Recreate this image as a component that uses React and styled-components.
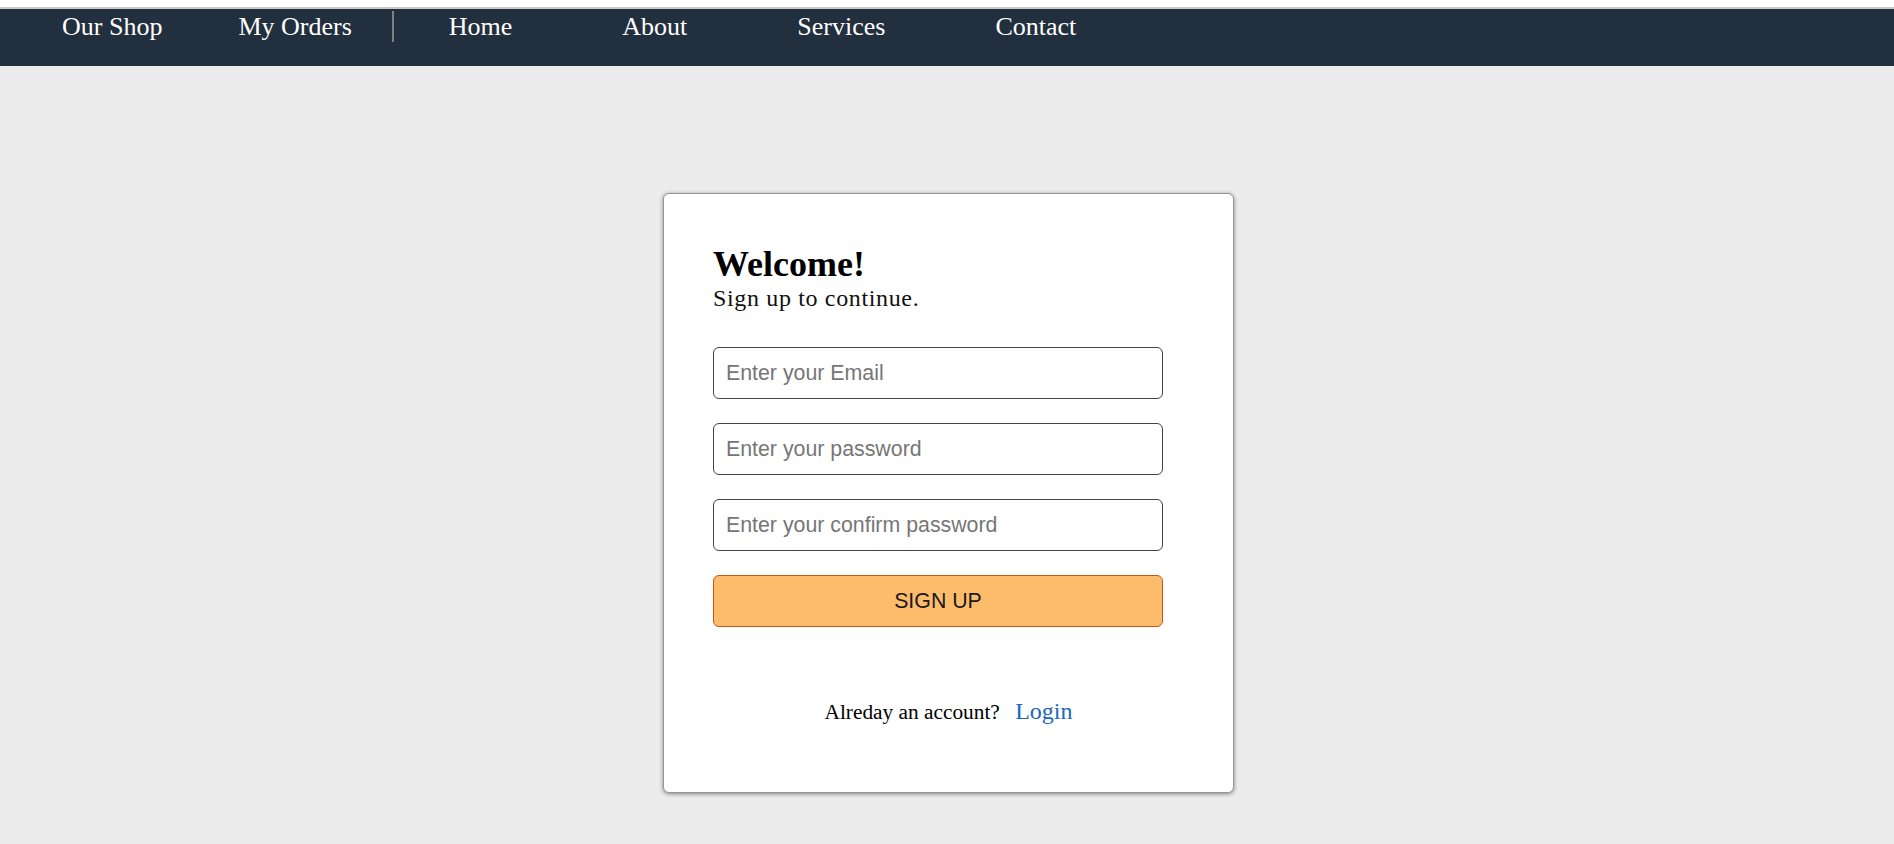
import React from "react";
import styled, { createGlobalStyle } from "styled-components";

const GlobalStyle = createGlobalStyle`
  html, body {
    margin: 0;
    padding: 0;
    background: #ececec;
    font-family: "Liberation Serif", "Times New Roman", serif;
  }
  * { box-sizing: border-box; }
`;

const TopStrip = styled.div`
  height: 7px;
  background: #ffffff;
`;

const NavBar = styled.nav`
  height: 59px;
  border-top: 2px solid #c8c8c4;
  background: #222f3e;
  padding: 2px 0 0 62px;
  display: flex;
  align-items: flex-start;
`;

const NavGroup = styled.div`
  display: flex;
  align-items: flex-start;
  gap: ${(p) => p.$gap}px;
  margin-right: ${(p) => p.$after || 0}px;
`;

const NavLink = styled.a`
  color: #ffffff;
  font-size: 26px;
  line-height: 30px;
  padding-top: 1px;
  text-decoration: none;
  white-space: nowrap;
  cursor: pointer;
`;

const Divider = styled.span`
  width: 2px;
  height: 31px;
  background: #7d7f83;
  margin-right: 55px;
`;

const Main = styled.main`
  display: flex;
  justify-content: center;
  padding: 127px 0 50px 3px;
`;

const Card = styled.section`
  width: 571px;
  background: #ffffff;
  border: 1px solid #959595;
  border-radius: 6px;
  box-shadow: 0 1px 4px rgba(0, 0, 0, 0.45);
  padding: 49px 49px 67px;
`;

const Title = styled.h1`
  margin: 0;
  font-size: 36px;
  font-weight: bold;
  color: #000;
`;

const Subtitle = styled.p`
  margin: 0;
  font-size: 24px;
  letter-spacing: 0.65px;
  color: #111;
`;

const Form = styled.form`
  width: 450px;
  margin-top: 35px;
  display: flex;
  flex-direction: column;
  gap: 24px;
`;

const Input = styled.input`
  width: 100%;
  height: 52px;
  border: 1px solid #3f434a;
  border-radius: 6px;
  padding: 0 12px;
  font-family: "Liberation Sans", Arial, sans-serif;
  font-size: 21.33px;
  color: #222;
  background: #fff;
  outline: none;
  &::placeholder {
    color: #767676;
  }
`;

const Button = styled.button`
  width: 100%;
  height: 52px;
  border: 1px solid #c8560f;
  border-radius: 6px;
  background: #fdbc6b;
  color: #1a1a1a;
  font-family: "Liberation Sans", Arial, sans-serif;
  font-size: 21.33px;
  cursor: pointer;
`;

const Footer = styled.p`
  margin: 71px 0 0;
  text-align: center;
  font-size: 21.33px;
  color: #000;
`;

const LoginLink = styled.a`
  margin-left: 10px;
  font-size: 24px;
  color: #1a66c0;
  text-decoration: none;
  cursor: pointer;
`;

export default function App() {
  return (
    <>
      <GlobalStyle />
      <TopStrip />
      <NavBar>
        <NavGroup $gap={76} $after={40}>
          <NavLink>Our Shop</NavLink>
          <NavLink>My Orders</NavLink>
        </NavGroup>
        <Divider />
        <NavGroup $gap={110}>
          <NavLink>Home</NavLink>
          <NavLink>About</NavLink>
          <NavLink>Services</NavLink>
          <NavLink>Contact</NavLink>
        </NavGroup>
      </NavBar>
      <Main>
        <Card>
          <Title>Welcome!</Title>
          <Subtitle>Sign up to continue.</Subtitle>
          <Form onSubmit={(e) => e.preventDefault()}>
            <Input type="email" placeholder="Enter your Email" />
            <Input type="password" placeholder="Enter your password" />
            <Input type="password" placeholder="Enter your confirm password" />
            <Button type="submit">SIGN UP</Button>
          </Form>
          <Footer>
            Alreday an account? <LoginLink>Login</LoginLink>
          </Footer>
        </Card>
      </Main>
    </>
  );
}
